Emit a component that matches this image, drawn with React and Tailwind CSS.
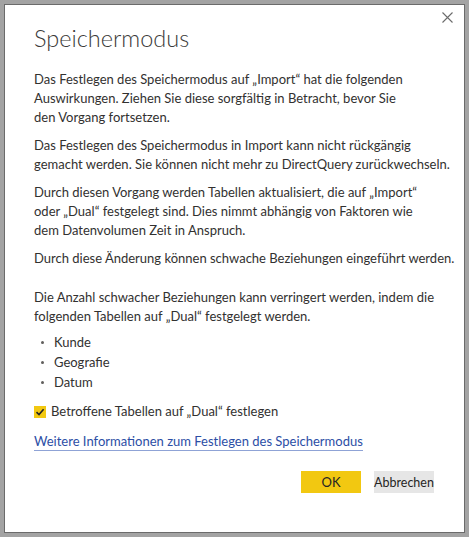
export default function App() {
  return (
    <div className="h-[537px] w-[469px] bg-[#a3a3a3] p-[4px]">
      <div
        className="relative flex h-full w-full flex-col border border-[#6b6b6b] bg-white pl-[29px] text-[13px] leading-[19px] text-[#323130]"
        style={{ fontFamily: '"Segoe UI", Lato, sans-serif' }}
      >
        {/* close */}
        <button type="button" className="absolute right-[11px] top-[7px] flex h-[11px] w-[11px] items-center justify-center">
          <svg width="11" height="11" viewBox="0 0 11 11" stroke="#6b6b6b" strokeWidth="1.1">
            <path d="M0.5 0.5L10.5 10.5M10.5 0.5L0.5 10.5" />
          </svg>
        </button>

        <h1 className="mt-[17px] text-[23.5px] font-light leading-[32px] text-[#3b3a39]">Speichermodus</h1>

        <div className="mt-[16px] flex flex-col gap-[9px] whitespace-nowrap">
          <p>
            Das Festlegen des Speichermodus auf „Import“ hat die folgenden
            <br />
            Auswirkungen. Ziehen Sie diese sorgfältig in Betracht, bevor Sie
            <br />
            den Vorgang fortsetzen.
          </p>
          <p>
            Das Festlegen des Speichermodus in Import kann nicht rückgängig
            <br />
            gemacht werden. Sie können nicht mehr zu DirectQuery zurückwechseln.
          </p>
          <p>
            Durch diesen Vorgang werden Tabellen aktualisiert, die auf „Import“
            <br />
            oder „Dual“ festgelegt sind. Dies nimmt abhängig von Faktoren wie
            <br />
            dem Datenvolumen Zeit in Anspruch.
          </p>
          <p>Durch diese Änderung können schwache Beziehungen eingeführt werden.</p>
          <p className="mt-[11px]">
            Die Anzahl schwacher Beziehungen kann verringert werden, indem die
            <br />
            folgenden Tabellen auf „Dual“ festgelegt werden.
          </p>
        </div>

        <ul className="mt-[7px] flex flex-col gap-[1px]">
          {["Kunde", "Geografie", "Datum"].map((item) => (
            <li key={item} className="flex items-center">
              <span className="ml-[7px] mr-[10px] h-[3px] w-[3px] rounded-full bg-[#605e5c]" />
              {item}
            </li>
          ))}
        </ul>

        <label className="mt-[10px] flex items-center">
          <span className="flex h-[12px] w-[12px] items-center justify-center bg-[#f2c811]">
            <svg width="10" height="10" viewBox="0 0 10 10" fill="none" stroke="#252423" strokeWidth="1.6">
              <path d="M1.5 5.2L4 7.6L8.6 2.2" />
            </svg>
          </span>
          <span className="ml-[5px]">Betroffene Tabellen auf „Dual“ festlegen</span>
        </label>

        <a
          href="#"
          className="mt-[11px] self-start border-b border-[#8fa3d6] leading-[18px] text-[#2c4ea5]"
        >
          Weitere Informationen zum Festlegen des Speichermodus
        </a>

        <div className="mt-[20px] flex justify-end gap-[13px] pr-[30px]">
          <button type="button" className="h-[22px] w-[60px] bg-[#f2c811] text-[13px] text-[#252423]">
            OK
          </button>
          <button type="button" className="h-[22px] w-[60px] bg-[#e6e6e6] text-[12.5px] text-[#252423]">
            Abbrechen
          </button>
        </div>
      </div>
    </div>
  );
}
